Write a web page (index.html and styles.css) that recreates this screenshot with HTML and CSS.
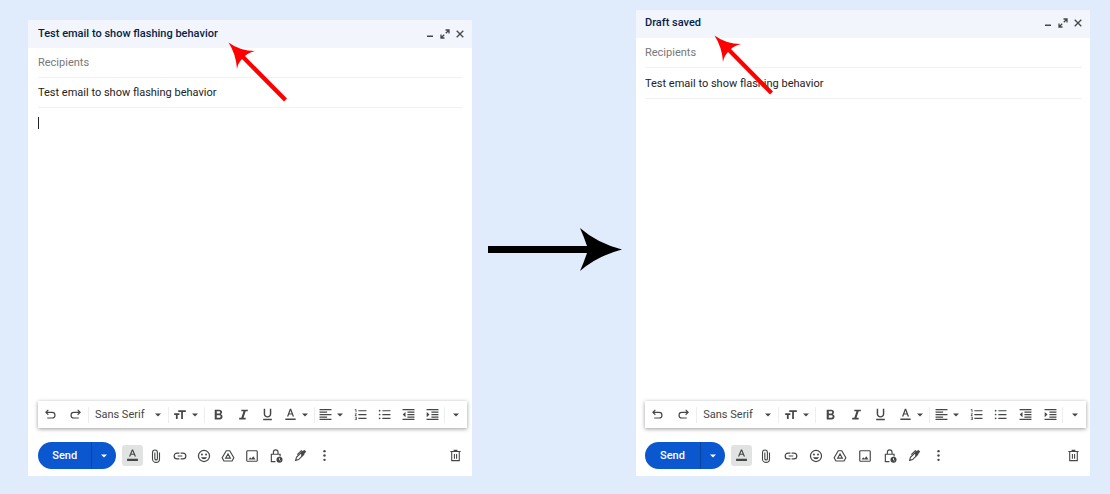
FILE: index.html
```html
<!DOCTYPE html>
<html lang="en">
<head>
<meta charset="utf-8">
<meta name="viewport" content="width=device-width, initial-scale=1">
<title>Compose window draft states</title>
<link rel="stylesheet" href="styles.css">
</head>
<body>
<main class="board" id="board">
  <div class="flow">
    <svg class="flow-arrow" viewBox="0 0 134 44" role="img" aria-label="then"><path d="M0 18H99Q96 9 92 0Q109 15 134 21.500Q109 28 92 43Q96 34 99 25H0Z"/></svg>
  </div>
</main>

<svg class="sprite" aria-hidden="true">
  <symbol id="i-min" viewBox="0 0 12 12"><path d="M3 7.500h6v1.500H3z"/></symbol>
  <symbol id="i-full" viewBox="0 0 12 12"><path class="line" d="M6.500 2H10V5.500M10 2L6.800 5.200M5.500 10H2V6.500M2 10l3.200-3.200" stroke-width="1.300"/></symbol>
  <symbol id="i-close" viewBox="0 0 12 12"><path class="line" d="M2.700 2.700l6.600 6.600M9.300 2.700L2.700 9.300" stroke-width="1.300"/></symbol>
  <symbol id="i-undo" viewBox="0 0 24 24"><path class="line" d="M8 3.500L3.500 8 8 12.500M4 8h11a5.200 5.200 0 0 1 0 10.500H6" stroke-width="2.200"/></symbol>
  <symbol id="i-redo" viewBox="0 0 24 24"><path class="line" d="M16 3.500L20.500 8 16 12.500M20 8H9a5.200 5.200 0 0 0 0 10.500h9" stroke-width="2.200"/></symbol>
  <symbol id="i-drop" viewBox="0 0 24 24"><path d="M3 7.500h18l-9 9z"/></symbol>
  <symbol id="i-size" viewBox="0 0 24 24"><path d="M9 4v3h5v12h3V7h5V4H9zm-7 8h3v7h3v-7h3V9H2v3z"/></symbol>
  <symbol id="i-bold" viewBox="0 0 24 24"><path d="M16.500 11.600c1.300-.9 2.100-2.200 2.100-3.700C18.600 5 16.400 3 13.500 3H5v18h9.200c3 0 5.200-2.200 5.200-5 0-2-1.100-3.600-2.900-4.400zM8.800 6h4.400a2 2 0 0 1 0 4.200H8.800V6zm4.800 12H8.800v-4.800h4.800a2.400 2.400 0 0 1 0 4.800z"/></symbol>
  <symbol id="i-italic" viewBox="0 0 24 24"><path d="M8 3v3h4L8 18H4v3h12v-3h-4l4-12h4V3z"/></symbol>
  <symbol id="i-under" viewBox="0 0 24 24"><path d="M12 17.500c3.800 0 7-2.700 7-6.500V1.500h-2.700V11c0 2.500-1.900 4-4.300 4s-4.300-1.500-4.300-4V1.500H5V11c0 3.800 3.200 6.500 7 6.500zM4 20h16v2.700H4z"/></symbol>
  <symbol id="i-color" viewBox="0 0 24 24"><path d="M10.800 1.500L5.500 15.500h2.600l1.200-3.300h5.400l1.200 3.300h2.600L13.200 1.500h-2.400zm-.7 8.500L12 4.700l1.900 5.300h-3.800zM2.500 19.500h19v2.700h-19z"/></symbol>
  <symbol id="i-format" viewBox="0 0 24 24"><path d="M10.900 1L5.500 14h2.400l1.300-3.200h5.600l1.300 3.200h2.400L13.100 1h-2.200zm-.9 7.800L12 3.500l2 5.300h-4zM2 18h20v4H2z"/></symbol>
  <symbol id="i-align" viewBox="0 0 24 24"><path d="M1 2h22v2.300H1zM1 6.500h14v2.300H1zM1 11h22v2.300H1zM1 15.500h14v2.300H1zM1 20h22v2.300H1z"/></symbol>
  <symbol id="i-ol" viewBox="0 0 24 24"><path d="M8 4h15v2.200H8zM8 11h15v2.200H8zM8 18h15v2.200H8zM1.500 2.500H4.500V8H3V4H1.500zM1.500 9.500h3.500v1.200L3.200 14h2v1.200H1.500V14l2-3.200h-2zM1.500 16.500H5V22H1.500v-1.100h2.300v-1H2.500v-1h1.300v-1.200H1.500z"/></symbol>
  <symbol id="i-ul" viewBox="0 0 24 24"><path d="M8 4h15v2.200H8zM8 11h15v2.200H8zM8 18h15v2.200H8z"/><circle cx="3" cy="5" r="1.600"/><circle cx="3" cy="12" r="1.600"/><circle cx="3" cy="19" r="1.600"/></symbol>
  <symbol id="i-out" viewBox="0 0 24 24"><path d="M1 2h22v2.300H1zM10 6.500h13v2.300H10zM10 11h13v2.300H10zM10 15.500h13v2.300H10zM1 20h22v2.300H1zM6.500 7.500v9.400l-5.200-4.700z"/></symbol>
  <symbol id="i-in" viewBox="0 0 24 24"><path d="M1 2h22v2.300H1zM10 6.500h13v2.300H10zM10 11h13v2.300H10zM10 15.500h13v2.300H10zM1 20h22v2.300H1zM1.300 7.500v9.400l5.200-4.700z"/></symbol>
  <symbol id="i-clip" viewBox="0 0 24 24"><path class="line" d="M18 6v11a6 6 0 0 1-12 0V6a4.200 4.200 0 0 1 8.400 0v10.500a2.200 2.200 0 0 1-4.400 0V6" stroke-width="1.900"/></symbol>
  <symbol id="i-link" viewBox="0 0 24 24"><path class="line" d="M11 7H7a5 5 0 0 0 0 10h4M13 7h4a5 5 0 0 1 0 10h-4M8 12h8" stroke-width="2.100"/></symbol>
  <symbol id="i-smile" viewBox="0 0 24 24"><circle class="line" cx="12" cy="12" r="9.500" stroke-width="2.100"/><circle cx="8.500" cy="9.500" r="1.700"/><circle cx="15.500" cy="9.500" r="1.700"/><path d="M6.800 14h10.400a5.600 5.600 0 0 1-10.400 0z"/></symbol>
  <symbol id="i-drive" viewBox="0 0 24 24"><path class="line" d="M9 3h6l7 12-3 5.500H5L2 15zM12 8.500l-4 7h8z" stroke-width="2"/></symbol>
  <symbol id="i-image" viewBox="0 0 24 24"><rect class="line" x="3" y="3" width="18" height="18" rx="1.500" stroke-width="2"/><path d="M6 18l3-4 2 2.500 3.200-4 3.800 5.500z"/></symbol>
  <symbol id="i-lock" viewBox="0 0 24 24"><path class="line" d="M11 21.500H4V9h15v4M7.500 9V5.500a4 4 0 0 1 8 0V9" stroke-width="2"/><circle cx="18" cy="18.500" r="5.200"/><path d="M18 15.500v3.300l2 1.500" fill="none" stroke="#fff" stroke-width="1.300"/></symbol>
  <symbol id="i-pen" viewBox="0 0 24 24"><path class="line" d="M3 21l1.500-5.500L14 6l4 4-9.500 9.500zM6 10.500L13.500 3l3 2.500" stroke-width="2"/><path d="M13 7l6-5.500 3.500 3.500L13.500 15z"/></symbol>
  <symbol id="i-dots" viewBox="0 0 24 24"><circle cx="12" cy="4" r="2.200"/><circle cx="12" cy="12" r="2.200"/><circle cx="12" cy="20" r="2.200"/></symbol>
  <symbol id="i-trash" viewBox="0 0 24 24"><path class="line" d="M5 5.500v16h14v-16M2.500 4.500h19M8.500 2.500h7M10 9v9M14 9v9" stroke-width="2"/></symbol>
</svg>

<template id="compose">
  <section class="compose">
    <header class="compose-head">
      <h2 class="compose-title"></h2>
      <button class="win-btn" aria-label="Minimize"><svg><use href="#i-min"/></svg></button>
      <button class="win-btn" aria-label="Full screen"><svg><use href="#i-full"/></svg></button>
      <button class="win-btn" aria-label="Close"><svg><use href="#i-close"/></svg></button>
    </header>
    <div class="fields">
      <input class="field" type="text" placeholder="Recipients" aria-label="Recipients">
      <input class="field subject" type="text" value="Test email to show flashing behavior" aria-label="Subject">
    </div>
    <div class="message" role="textbox" aria-label="Message body" aria-multiline="true" tabindex="0"></div>
    <footer class="compose-foot">
      <div class="format-bar" role="toolbar" aria-label="Formatting">
        <button aria-label="Undo"><svg class="icon"><use href="#i-undo"/></svg></button>
        <button aria-label="Redo"><svg class="icon"><use href="#i-redo"/></svg></button>
        <i class="sep"></i>
        <button class="font-btn">Sans Serif<svg class="drop"><use href="#i-drop"/></svg></button>
        <i class="sep"></i>
        <button class="pair" aria-label="Size"><svg class="icon big"><use href="#i-size"/></svg><svg class="drop"><use href="#i-drop"/></svg></button>
        <i class="sep"></i>
        <button aria-label="Bold"><svg class="icon"><use href="#i-bold"/></svg></button>
        <button aria-label="Italic"><svg class="icon"><use href="#i-italic"/></svg></button>
        <button aria-label="Underline"><svg class="icon"><use href="#i-under"/></svg></button>
        <button class="pair" aria-label="Text color"><svg class="icon"><use href="#i-color"/></svg><svg class="drop"><use href="#i-drop"/></svg></button>
        <i class="sep"></i>
        <button class="pair" aria-label="Align"><svg class="icon"><use href="#i-align"/></svg><svg class="drop"><use href="#i-drop"/></svg></button>
        <button aria-label="Numbered list"><svg class="icon"><use href="#i-ol"/></svg></button>
        <button aria-label="Bulleted list"><svg class="icon"><use href="#i-ul"/></svg></button>
        <button aria-label="Indent less"><svg class="icon"><use href="#i-out"/></svg></button>
        <button aria-label="Indent more"><svg class="icon"><use href="#i-in"/></svg></button>
        <i class="sep"></i>
        <button aria-label="More formatting"><svg class="drop"><use href="#i-drop"/></svg></button>
      </div>
      <div class="action-bar">
        <div class="send">
          <button class="send-main">Send</button>
          <button class="send-more" aria-label="More send options"><svg class="drop"><use href="#i-drop"/></svg></button>
        </div>
        <i></i>
        <button aria-label="Formatting options" aria-pressed="true"><span class="active"><svg class="icon"><use href="#i-format"/></svg></span></button>
        <button aria-label="Attach files"><svg class="icon big"><use href="#i-clip"/></svg></button>
        <button aria-label="Insert link"><svg class="icon big"><use href="#i-link"/></svg></button>
        <button aria-label="Insert emoji"><svg class="icon big"><use href="#i-smile"/></svg></button>
        <button aria-label="Insert from Drive"><svg class="icon big"><use href="#i-drive"/></svg></button>
        <button aria-label="Insert photo"><svg class="icon big"><use href="#i-image"/></svg></button>
        <button aria-label="Confidential mode"><svg class="icon big"><use href="#i-lock"/></svg></button>
        <button aria-label="Insert signature"><svg class="icon"><use href="#i-pen"/></svg></button>
        <button aria-label="More options"><svg class="icon"><use href="#i-dots"/></svg></button>
        <i></i>
        <button aria-label="Discard draft"><svg class="icon"><use href="#i-trash"/></svg></button>
      </div>
    </footer>
    <svg class="pointer" viewBox="0 0 60 60" aria-hidden="true"><path d="M.5.500Q12 9 27 9Q20 11 17 14L59 56.500 56 59.500 14 17Q10 21 9 27Q8 12 .5.500Z"/></svg>
  </section>
</template>
<script src="app.js"></script>
</body>
</html>
```

FILE: app.js
```js
const board = document.getElementById("board");
const template = document.getElementById("compose");

function buildCompose(title, state) {
  const node = template.content.firstElementChild.cloneNode(true);
  node.classList.add(state);
  node.querySelector(".compose-title").textContent = title;
  return node;
}

board.prepend(buildCompose("Test email to show flashing behavior", "editing"));
board.append(buildCompose("Draft saved", "saved"));
```

FILE: styles.css
```css
* { box-sizing: border-box; }

body {
  margin: 0;
  background: #e0ecfb;
  color: #222;
  font: 11px/16px Roboto, "Open Sans", sans-serif;
}

button, input { font: inherit; color: inherit; margin: 0; }

button {
  display: flex;
  align-items: center;
  justify-content: center;
  min-width: 0;
  padding: 0;
  border: 0;
  background: none;
  color: #444746;
  cursor: pointer;
}

svg { display: block; flex: none; fill: currentColor; }
.line { fill: none; stroke: currentColor; }
.sprite { position: absolute; width: 0; height: 0; }

.board {
  display: grid;
  grid-template-columns: minmax(0, 444fr) 164px minmax(0, 454fr);
  min-height: 100vh;
  padding: 10px 20px 18px 28px;
}

.flow { display: flex; align-items: center; padding: 14px 14px 0 16px; }
.flow-arrow { width: 100%; color: #000; }

.compose {
  position: relative;
  display: flex;
  flex-direction: column;
  background: #fff;
}
.editing { --left: 10px; --right: 5px; margin-top: 10px; }
.saved { --left: 9px; --right: 4px; }

.compose-head {
  display: flex;
  align-items: center;
  height: 28px;
  padding: 0 5px 0 var(--left);
  background: #f2f6fc;
}
.saved .compose-head { padding-bottom: 3px; }
.compose-title {
  flex: 1;
  margin: 0;
  color: #041e49;
  font-size: 11px;
  font-weight: 500;
}
.win-btn { width: 15px; height: 16px; }
.win-btn svg { width: 12px; height: 12px; }

.fields { padding: 0 10px 0 var(--left); }
.saved .fields { padding-right: 8px; }
.field {
  display: block;
  width: 100%;
  height: 30px;
  padding: 0;
  border: 0;
  border-bottom: 1px solid #f0f1f1;
  background: none;
  outline: 0;
}
.saved .subject { height: 31px; }
.field::placeholder { color: #777; opacity: 1; }

.message { flex: 1; padding: 9px var(--left); outline: 0; }
.editing .message::before {
  content: "";
  display: block;
  width: 1px;
  height: 12px;
  background: #222;
}

.compose-foot { padding: 0 var(--right) 7px var(--left); }

.format-bar, .action-bar { display: grid; height: 27px; }
.format-bar {
  grid-template-columns:
    minmax(0, 25fr) minmax(0, 25fr) 1px minmax(0, 79fr) 1px minmax(0, 35fr) 1px
    minmax(0, 27fr) repeat(2, minmax(0, 24fr)) minmax(0, 35fr) 1px minmax(0, 33fr)
    minmax(0, 24fr) repeat(3, minmax(0, 24fr)) 1px minmax(0, 22fr);
  margin-bottom: 14px;
  background: #fff;
  box-shadow: 0 1px 4px rgba(0, 0, 0, .4);
}
.sep { height: 16px; align-self: center; background: #eceded; }
.icon { width: 13px; height: 13px; }
.icon.big { width: 14px; height: 14px; }
.drop { width: 8px; height: 8px; }
.font-btn { justify-content: space-between; padding: 0 6px; font-size: 11px; }
.pair { gap: 4px; }

.action-bar {
  grid-template-columns:
    minmax(0, 78fr) minmax(0, 4fr) repeat(9, minmax(0, 24fr))
    minmax(0, 107fr) minmax(0, 24fr);
}
.active {
  display: flex;
  align-items: center;
  justify-content: center;
  width: 21px;
  height: 21px;
  border-radius: 3px;
  background: #e1e2e2;
}
.send {
  display: flex;
  overflow: hidden;
  border-radius: 14px;
  background: #0b57d0;
}
.send button { color: #fff; }
.send-main { flex: 54; font-weight: 500; }
.send-more { flex: 24; border-left: 1px solid #08429f; }

.pointer {
  position: absolute;
  width: 60px;
  height: 60px;
  color: #f00;
  pointer-events: none;
}
.editing .pointer { left: 200px; top: 22px; }
.saved .pointer { left: 78px; top: 25px; }
```
